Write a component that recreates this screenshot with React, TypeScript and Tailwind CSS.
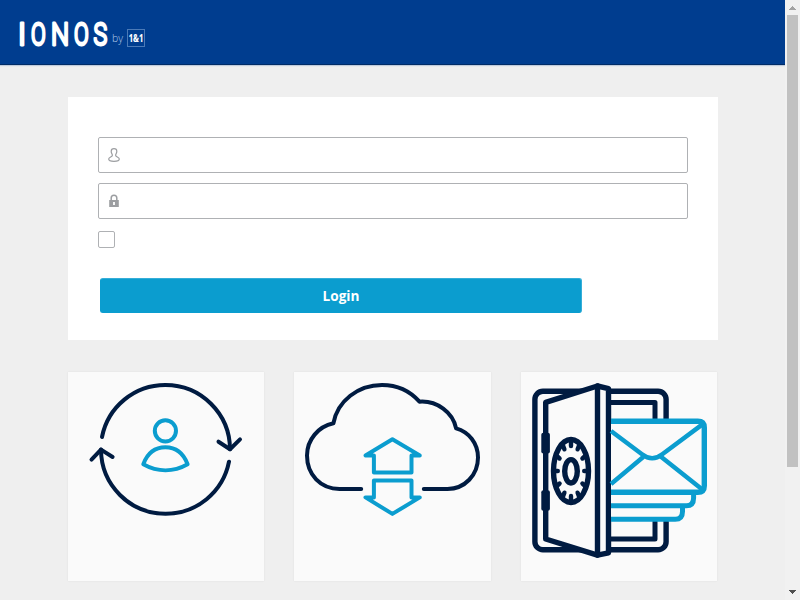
const NAVY = "#001b41";
const CYAN = "#0b9dcf";

const LOGO_LETTERS = [
  { char: "I", x: 20, width: 4.6 },
  { char: "O", x: 31.6, width: 13.8 },
  { char: "N", x: 52.6, width: 15.4 },
  { char: "O", x: 74.6, width: 13.8 },
  { char: "S", x: 93.8, width: 13.6 },
];

const LOGO_STROKE = 2.9;

const GLYPH_BOX: Record<string, { left: number; width: number }> = {
  I: { left: 3.5, width: 2 },
  O: { left: 2.3, width: 17.4 },
  N: { left: 3.3, width: 16.4 },
  S: { left: 1.7, width: 16 },
};

function Logo() {
  return (
    <svg width="160" height="64" viewBox="0 0 160 64" role="img">
      <g fill="#fff" stroke="#fff" strokeWidth={LOGO_STROKE} strokeLinejoin="round" fontFamily="Roboto, sans-serif" fontSize="32" fontWeight="300">
        {LOGO_LETTERS.map(({ char, x, width }, i) => {
          const box = GLYPH_BOX[char];
          const scale = width / (box.width + LOGO_STROKE);
          return (
            <text key={i} transform={`translate(${x - (box.left - LOGO_STROKE / 2) * scale} 45.3) scale(${scale} 1)`}>
              {char}
            </text>
          );
        })}
      </g>
      <text x="112" y="42" fill="#b4cbe8" fontFamily="'Open Sans', sans-serif" fontSize="10.5" fontWeight="300" textLength="11" lengthAdjust="spacingAndGlyphs">by</text>
      <rect x="127.5" y="29.5" width="17" height="17" fill="none" stroke="#4b7ab7" />
      <text x="128.7" y="41.6" fill="#fff" stroke="#fff" strokeWidth="0.15" fontFamily="'Open Sans', sans-serif" fontSize="11" fontWeight="700" textLength="14.6" lengthAdjust="spacingAndGlyphs">1&amp;1</text>
    </svg>
  );
}

function SyncIcon() {
  return (
    <svg className="block h-full w-full" viewBox="68 372 196 209" fill="none" stroke={NAVY} strokeWidth="4" strokeLinecap="round" strokeLinejoin="round">
      <path d="M102 437A64.5 64.5 0 0 1 165.4 385A64.5 64.5 0 0 1 230 449.2" />
      <path d="M218.5 441.7 230 449.2 240 439.4" />
      <path d="M229 461.7A64.5 64.5 0 0 1 165.4 513.8A64.5 64.5 0 0 1 101 449.6" />
      <path d="M91.5 459.6 101 449.6 112.6 457" />
      <g stroke={CYAN}>
        <circle cx="165.4" cy="430.8" r="10.6" />
        <path d="M143.3 464.2C147.5 453 155.5 447.3 165.4 447.3S183.3 453 187.6 464.2C173.5 472.2 157.5 472.2 143.3 464.2Z" />
      </g>
    </svg>
  );
}

function CloudIcon() {
  return (
    <svg className="block h-full w-full" viewBox="294 372 197 209" fill="none" stroke={NAVY} strokeWidth="4" strokeLinecap="round" strokeLinejoin="round">
      <path d="M361.2 488.9H339.5C320.5 488.9 307 474.5 307 455.5C307 439.5 318.5 426.5 333.4 423.3C337.5 401 358 385 382 385C396.5 385 410 391 419.5 401.7C437 400.5 453 412.5 456.1 428.4C469 432 478 443.5 478 457.5C478 475 464.8 488.9 447.5 488.9H423.8" />
      <g stroke={CYAN}>
        <path d="M392.4 439.2 365.5 455.5H373.9V472.4H411.5V455.5H419.8Z" />
        <path d="M392.4 513.9 365.5 497.4H373.9V480.6H411.5V497.4H419.8Z" />
      </g>
    </svg>
  );
}

const DIAL_TICKS = Array.from({ length: 12 }, (_, i) => (i * Math.PI) / 6);

function SafeIcon() {
  return (
    <svg className="block h-full w-full" viewBox="521 372 196 209" fill="none" stroke={NAVY} strokeWidth="5.4" strokeLinecap="round" strokeLinejoin="round">
      <rect x="534.9" y="391.3" width="131.2" height="158.4" rx="8" />
      <path d="M608 402.4H655V539H608" strokeWidth="5" />
      <path d="M545.7 402.4 597.4 386 608.5 388.6V552.8L597.4 555.2 545.7 539Z" fill="#fafafa" />
      <path d="M597.5 386V555" />
      <rect x="541.3" y="432.8" width="8.6" height="20.6" rx="2" fill={NAVY} stroke="none" />
      <rect x="541.3" y="490.2" width="8.6" height="20.6" rx="2" fill={NAVY} stroke="none" />
      <ellipse cx="571" cy="471" rx="17.5" ry="31.5" />
      <ellipse cx="571" cy="471.3" rx="6.3" ry="11.7" />
      {DIAL_TICKS.map((a) => (
        <line
          key={a}
          x1={571 + 17 * Math.cos(a)}
          y1={471 + 31 * Math.sin(a)}
          x2={571 + 13.2 * Math.cos(a)}
          y2={471 + 25 * Math.sin(a)}
          strokeWidth="4.4"
        />
      ))}
      <g stroke={CYAN} strokeLinecap="butt">
        <path d="M611 421.3H697.8Q704.3 421.3 704.3 427.8V485.8Q704.3 492.3 697.8 492.3H611V421.3Z" fill="#fafafa" stroke="none" />
        <path d="M611 421.3H697.8Q704.3 421.3 704.3 427.8V485.8Q704.3 492.3 697.8 492.3H611" />
        <g strokeWidth="4.5">
          <path d="M611 431 642 454.2Q652.2 462.2 662.3 454.2L702.4 424.4" />
          <path d="M611 483.9 643.5 456.8M660.7 456.5 702.3 489.6" />
        </g>
        <path d="M611 495H691V508H680V519H611Z" fill="#fafafa" stroke="none" />
        <path d="M693.6 494V498Q693.6 505.8 686.3 505.8H611M682.5 508V511.5Q682.5 519.3 675.2 519.3H611" strokeWidth="5" />
      </g>
    </svg>
  );
}

function UserIcon() {
  return (
    <svg width="12" height="14" viewBox="0 0 12 14" fill="none" stroke="#9c9ea1" strokeWidth="1.2">
      <path d="M6 .7C4.3.7 3.2 1.7 3.2 3.4C3.2 5 4.4 6.1 4.4 7.2C4.4 9.1.7 8.8.7 11.1C.7 12.8 2.9 13.4 6 13.4S11.3 12.8 11.3 11.1C11.3 8.8 7.6 9.1 7.6 7.2C7.6 6.1 8.8 5 8.8 3.4C8.8 1.7 7.7.7 6 .7Z" />
    </svg>
  );
}

function LockIcon() {
  return (
    <svg width="12" height="14" viewBox="0 0 12 14">
      <path d="M3.2 6V4Q3.2 1.2 6 1.2T8.8 4V6" fill="none" stroke="#9c9ea1" strokeWidth="1.5" />
      <path fillRule="evenodd" d="M1.2 5.9H10.8V13H1.2ZM5.1 8V11H6.9V8Z" fill="#9c9ea1" />
    </svg>
  );
}

const FIELD = "flex h-9 items-center rounded-[2px] border border-[#afb1b4] bg-white pl-[9px]";
const CARD = "h-[209px] bg-[#fafafa] shadow-[0_0_2px_rgba(0,0,0,0.07)]";

export default function App() {
  return (
    <div className="flex h-[600px] w-[800px] overflow-hidden bg-[#efefef] font-['Open_Sans',sans-serif]">
      <div className="w-[785px]">
        <header className="h-[65px] border-b border-[#002b66] bg-[#003d8f] shadow-[0_1px_1px_rgba(0,61,143,0.2)]">
          <Logo />
        </header>
        <main className="ml-[68px] mt-8 w-[650px]">
          <form className="h-[243px] bg-white px-[30px] pt-10">
            <div className={FIELD}><UserIcon /></div>
            <div className={`${FIELD} mt-[10px]`}><LockIcon /></div>
            <div className="mt-3 h-[17px] w-[17px] rounded-[2px] border border-[#afb1b4] bg-white" />
            <button type="button" className="ml-[2px] mt-[30px] flex h-[35px] w-[482px] items-center justify-center rounded-[3px] border border-t-[#35aed8] border-r-[#35aed8] border-b-[#0b9dcf] border-l-[#0b9dcf] bg-[#0b9dcf] pt-px text-[13.6px] leading-5 font-bold text-white">
              Login
            </button>
          </form>
          <div className="mt-8 flex gap-[30px]">
            <div className={`${CARD} w-[196px]`}><SyncIcon /></div>
            <div className={`${CARD} w-[197px]`}><CloudIcon /></div>
            <div className={`${CARD} w-[196px]`}><SafeIcon /></div>
          </div>
        </main>
      </div>
      <div className="flex w-[15px] flex-col items-center bg-[#f1f1f1]">
        <svg width="15" height="15" viewBox="0 0 15 15" shapeRendering="crispEdges">
          <path d="M7 6H8V7H9V8H10V9H11V10H4V9H5V8H6V7H7Z" fill="#a3a3a3" />
        </svg>
        <div className="h-[452px] w-[11px] bg-[#c1c1c1]" />
        <svg className="mt-auto" width="15" height="15" viewBox="0 0 15 15" shapeRendering="crispEdges">
          <path d="M4 5H11V6H10V7H9V8H8V9H7V8H6V7H5V6H4Z" fill="#505050" />
        </svg>
      </div>
    </div>
  );
}
